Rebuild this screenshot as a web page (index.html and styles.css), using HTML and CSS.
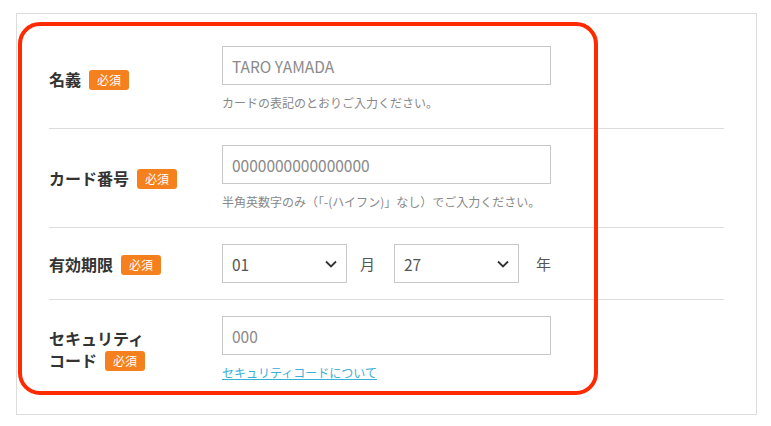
FILE: index.html
```html
<!DOCTYPE html>
<html lang="ja">
<head>
  <meta charset="UTF-8" />
  <meta name="viewport" content="width=device-width, initial-scale=1.0"/>
  <title>カード情報入力</title>
  <link rel="stylesheet" href="styles.css">
</head>
<body>
  <div class="card-form">
    <div class="highlight"></div>

    <div class="row">
      <div class="label">名義<span class="req">必須</span></div>
      <div class="field">
        <input type="text" placeholder="TARO YAMADA">
        <p class="hint">カードの表記のとおりご入力ください。</p>
      </div>
    </div>

    <div class="row">
      <div class="label">カード番号<span class="req">必須</span></div>
      <div class="field">
        <input type="text" placeholder="0000000000000000">
        <p class="hint">半角英数字のみ（「-(ハイフン)」なし）でご入力ください。</p>
      </div>
    </div>

    <div class="row">
      <div class="label">有効期限<span class="req">必須</span></div>
      <div class="field expiry">
        <select>
          <option>01</option>
        </select>
        <span class="unit unit-month">月</span>
        <select>
          <option>27</option>
        </select>
        <span class="unit unit-year">年</span>
      </div>
    </div>

    <div class="row">
      <div class="label">
        <span class="label-line">セキュリティ</span>
        <span class="label-line">コード<span class="req">必須</span></span>
      </div>
      <div class="field">
        <input type="text" placeholder="000">
        <p class="hint"><a href="#">セキュリティコードについて</a></p>
      </div>
    </div>
  </div>
</body>
</html>
```

FILE: styles.css
```css
body {
  margin: 0;
  font-family: "Noto Sans CJK JP", "Noto Sans", sans-serif;
  background: #fff;
  color: #333;
}
.card-form {
  position: relative;
  width: 741px;
  box-sizing: border-box;
  margin: 13px 0 0 16px;
  padding: 16px 32px;
  border: 1px solid #dcdcdc;
}
.highlight {
  position: absolute;
  left: 1px;
  top: 8px;
  width: 580px;
  height: 373px;
  box-sizing: border-box;
  border: 4.5px solid #ff2a00;
  border-radius: 22px;
  pointer-events: none;
}
.row {
  display: flex;
  align-items: center;
  padding: 16px 0;
  border-bottom: 1px solid #dcdcdc;
}
.row:last-child {
  border-bottom: none;
}
.label {
  width: 173px;
  flex-shrink: 0;
  font-size: 16px;
  font-weight: bold;
  line-height: 22px;
  color: #333;
}
.label-line {
  display: block;
}
.req {
  display: inline-block;
  margin-left: 8px;
  padding: 0 8px;
  height: 20px;
  line-height: 20px;
  font-size: 12px;
  font-weight: normal;
  color: #fff;
  background: #f5801e;
  border-radius: 3px;
  vertical-align: 1px;
}
.field input,
.field select {
  box-sizing: border-box;
  height: 39px;
  border: 1px solid #c8c8c8;
  border-radius: 0;
  padding: 0 9px;
  font-family: inherit;
  font-size: 15.5px;
  color: #555;
  background: #fff;
}
.field input {
  display: block;
  width: 329px;
}
.field input::placeholder {
  color: #8a8a8a;
}
.hint {
  margin: 9px 0 0;
  font-size: 12px;
  line-height: 18px;
  color: #888;
}
.hint a {
  color: #3ab0d6;
  text-decoration: underline;
}
.expiry {
  display: flex;
  align-items: center;
}
.expiry select {
  width: 125px;
  appearance: none;
  -webkit-appearance: none;
  background-image: url("data:image/svg+xml,%3Csvg xmlns='http://www.w3.org/2000/svg' width='12' height='8' viewBox='0 0 12 8'%3E%3Cpath d='M1 1.5l5 5 5-5' fill='none' stroke='%23333' stroke-width='1.8'/%3E%3C/svg%3E");
  background-repeat: no-repeat;
  background-position: right 9px center;
}
.unit {
  font-size: 15px;
  color: #555;
}
.unit-month {
  margin: 0 19px 0 13px;
}
.unit-year {
  margin-left: 17px;
}
```
